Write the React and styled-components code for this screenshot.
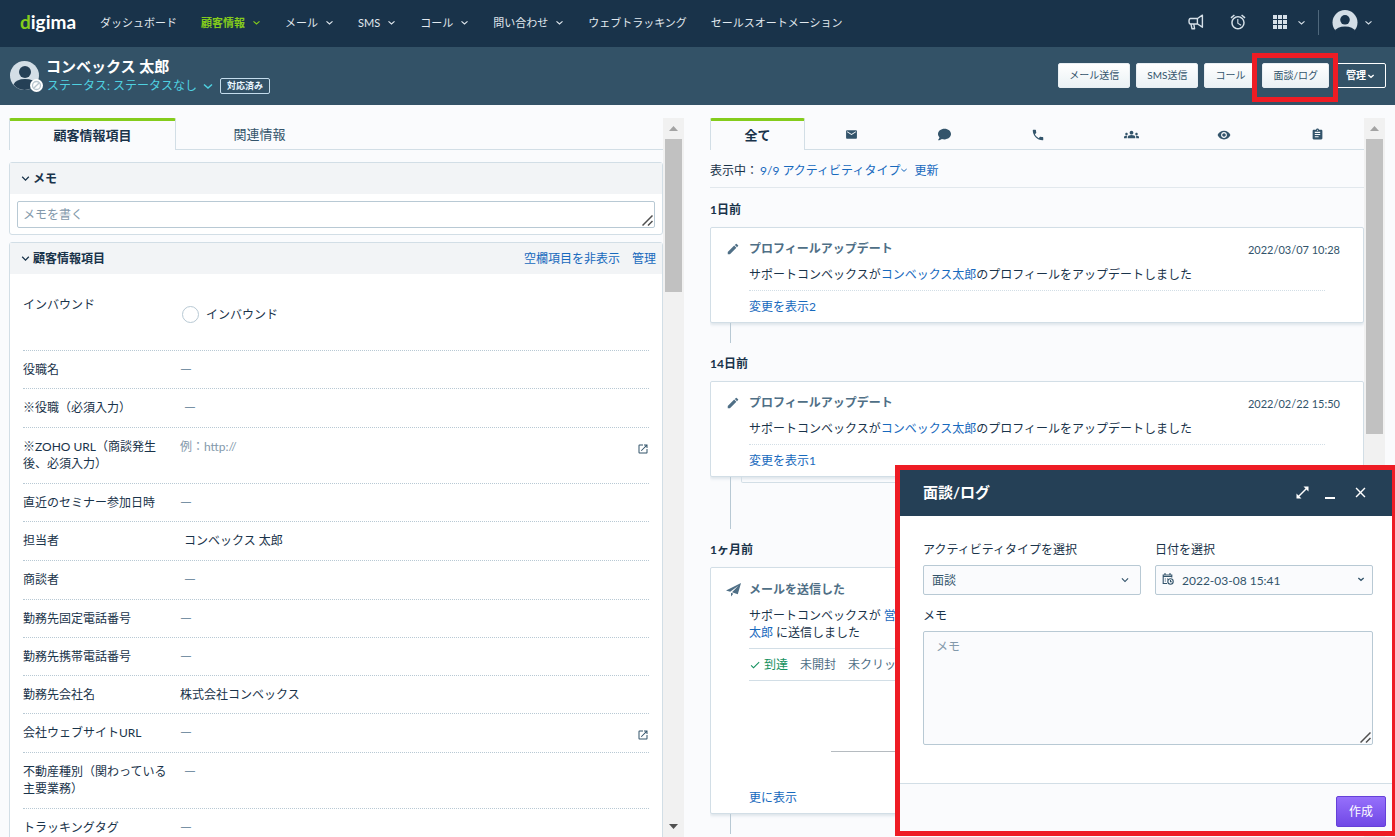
import React from "react";
import styled, { createGlobalStyle, css } from "styled-components";
import {
  MdAlarm,
  MdAssignment,
  MdCheck,
  MdClose,
  MdEdit,
  MdEmail,
  MdGroups,
  MdKeyboardArrowDown,
  MdOpenInNew,
  MdPhone,
  MdVisibility,
} from "react-icons/md";
import { FaComment } from "react-icons/fa";

const color = {
  nav: "#19334a",
  bar: "#335267",
  panelHead: "#254056",
  page: "#fafbfd",
  ink: "#19334a",
  slate: "#33546b",
  muted: "#4f6f86",
  faint: "#8399ab",
  line: "#d2dee6",
  field: "#b8c9d4",
  link: "#1769bd",
  green: "#84cc1c",
  highlight: "#ee1c24",
};

const GlobalStyle = createGlobalStyle`
  *, *::before, *::after { box-sizing: border-box; }
  body {
    margin: 0;
    background: ${color.page};
    color: ${color.ink};
    font: 12px/17px Lato, "Noto Sans CJK JP", sans-serif;
  }
  button, input, select, textarea { font: inherit; color: inherit; }
  button { cursor: pointer; }
  a { color: ${color.link}; text-decoration: none; }
  svg { display: block; flex: none; }
`;

const Page = styled.div`
  display: flex;
  flex-direction: column;
  height: 100vh;
  min-width: 1100px;
  overflow: hidden;
`;

/* ---------- top navigation ---------- */

const TopNav = styled.header`
  flex: none;
  display: flex;
  align-items: center;
  height: 47px;
  padding: 0 22px 3px 20px;
  background: ${color.nav};
  color: #e1e9ef;
`;

const Logo = styled.a`
  width: 80px;
  color: #fff;
  font-size: 19px;
  font-weight: 700;
  line-height: 24px;
  span { color: ${color.green}; }
`;

const Menu = styled.nav`
  display: flex;
  gap: 24px;
  flex: 1;
  white-space: nowrap;
`;

const MenuLink = styled.a`
  display: flex;
  align-items: center;
  gap: 7px;
  font-size: 11px;
  color: ${(p) => (p.$active ? color.green : "#e1e9ef")};
  font-weight: ${(p) => (p.$active ? 700 : 400)};
`;

const Tools = styled.div`
  display: flex;
  align-items: center;
  gap: 25px;
`;

const Tool = styled.button`
  display: flex;
  align-items: center;
  gap: 9px;
  padding: 0;
  border: 0;
  background: none;
  color: #d6e0e8;
`;

const AccountTool = styled(Tool)`
  height: 25px;
  margin-left: -13px;
  padding-left: 13px;
  border-left: 1px solid #4f687c;
  gap: 6px;
`;

/* ---------- customer bar ---------- */

const CustomerBar = styled.section`
  flex: none;
  display: flex;
  align-items: flex-start;
  height: 58px;
  padding: 0 9px 0 10px;
  background: ${color.bar};
`;

const AvatarBox = styled.div`
  padding-top: 13px;
  margin-right: 3px;
`;

const Identity = styled.div`
  flex: 1;
  padding-top: 8px;
`;

const CustomerName = styled.h1`
  margin: 0;
  color: #fff;
  font-size: 15px;
  line-height: 22px;
`;

const StatusLine = styled.div`
  display: flex;
  align-items: center;
  gap: 6px;
  color: #4fd1e0;
`;

const StatusButton = styled.button`
  display: flex;
  align-items: center;
  gap: 5px;
  padding: 0 0 0 1px;
  border: 0;
  background: none;
`;

const StatusTag = styled.span`
  height: 16px;
  padding: 0 6px;
  border: 1px solid #c4dcec;
  border-radius: 2px;
  color: #e9f6ff;
  font-size: 9px;
  font-weight: 700;
  line-height: 14px;
`;

const Actions = styled.div`
  display: flex;
  gap: 6px;
  padding-top: 16px;
`;

const ActionButton = styled.button`
  display: flex;
  align-items: center;
  justify-content: center;
  gap: 1px;
  height: 25px;
  padding: 0 10px;
  border: 1px solid #e8eef2;
  border-radius: 2px;
  background: linear-gradient(#fff, #eaf1f4);
  color: ${color.slate};
  font-size: 10px;
  line-height: 15px;
  white-space: nowrap;
  ${(p) =>
    p.$outline &&
    css`
      border-color: #fff;
      background: none;
      color: #fff;
      font-weight: 700;
    `}
`;

const Highlighted = styled.div`
  position: relative;
  &::after {
    content: "";
    position: absolute;
    inset: -10px -9px -14px -10px;
    border: 5px solid ${color.highlight};
    pointer-events: none;
  }
`;

/* ---------- two scrolling columns ---------- */

const Columns = styled.main`
  flex: 1;
  min-height: 0;
  display: flex;
  gap: 26px;
  padding: 13px 10px 0 9px;
`;

const Column = styled.section`
  flex: 1;
  min-width: 0;
  display: flex;
`;

const Scroller = styled.div`
  flex: 1;
  min-width: 0;
  overflow: hidden;
`;

const Track = styled.div`
  flex: none;
  width: 21px;
  display: flex;
  flex-direction: column;
  align-items: center;
  background: #f1f1f1;
`;

const TrackEnd = styled.span`
  display: flex;
  align-items: center;
  justify-content: center;
  height: 21px;
  color: ${(p) => (p.$idle ? "#a3a3a3" : "#505050")};
`;

const Thumb = styled.span`
  width: 17px;
  height: ${(p) => p.$size}px;
  margin-bottom: auto;
  background: #c1c1c1;
`;

const TabBar = styled.div`
  display: flex;
  height: 32px;
  border-bottom: 1px solid ${color.line};
`;

const Tab = styled.button`
  ${(p) => (p.$fill ? "flex: 1 1 0; min-width: 0;" : "width: 167px;")}
  display: flex;
  align-items: center;
  justify-content: center;
  height: 32px;
  padding: 1px 0 0;
  border: 0;
  background: none;
  color: ${color.slate};
  font-size: 13px;
  ${(p) =>
    p.$active &&
    css`
      padding: 0;
      border: solid ${color.line};
      border-width: 3px 1px 0;
      border-top-color: ${color.green};
      border-radius: 2px 2px 0 0;
      background: ${color.page};
      color: ${color.ink};
      font-weight: 700;
    `}
`;

/* ---------- profile cards ---------- */

const Card = styled.section`
  margin-top: ${(p) => (p.$first ? 12 : 7)}px;
  border: 1px solid ${color.line};
  border-radius: 3px;
  background: #fff;
`;

const CardHead = styled.div`
  display: flex;
  align-items: center;
  gap: 12px;
  height: 31px;
  padding: 0 6px 0 8px;
  background: #f2f4f6;
`;

const Fold = styled.button`
  display: flex;
  align-items: center;
  gap: 0;
  margin-right: auto;
  padding: 0;
  border: 0;
  background: none;
  font-weight: 700;
`;

const NoteField = styled.div`
  position: relative;
  display: flex;
  ${(p) => p.$inset && "padding: 7px 7px 6px;"}
  > svg {
    position: absolute;
    right: ${(p) => (p.$inset ? 9 : 2)}px;
    bottom: ${(p) => (p.$inset ? 8 : 2)}px;
  }
`;

const Note = styled.textarea`
  flex: 1;
  height: ${(p) => p.$height}px;
  padding: ${(p) => (p.$inset ? "4px 5px" : "6px 12px")};
  border: 1px solid ${color.field};
  border-radius: 2px;
  background: ${(p) => (p.$inset ? "#fff" : color.page)};
  resize: none;
  overflow: hidden;
  &::placeholder { color: ${color.faint}; opacity: 1; }
`;

const Fields = styled.dl`
  margin: 0 13px;
`;

const rowHeight = { radio: 77, text: 38, pick: 39, link: 39 };

const FieldRow = styled.div`
  display: flex;
  min-height: ${(p) => (p.$double ? 56 : rowHeight[p.$kind])}px;
  padding-top: ${(p) => (p.$kind === "radio" ? 22 : 10)}px;
  border-bottom: 1px dotted ${color.field};
  dt { width: 157px; white-space: pre-line; }
  dd {
    flex: 1;
    display: flex;
    justify-content: space-between;
    margin: 0;
    padding-left: ${(p) => (p.$kind === "pick" ? 4 : 0)}px;
  }
`;

const Hint = styled.span`
  color: ${color.faint};
`;

const Empty = styled.span`
  color: #7891a5;
  font-size: 15px;
  line-height: 15px;
`;

const RadioLabel = styled.label`
  display: flex;
  align-items: center;
  gap: 7px;
  height: 17px;
  margin: 10px 0 0 2px;
`;

const Radio = styled.input`
  appearance: none;
  width: 17px;
  height: 17px;
  margin: 0;
  border: 1px solid ${color.field};
  border-radius: 50%;
  background: #fff;
`;

const OpenLink = styled.a`
  padding: 5px 0 0;
  color: ${color.slate};
`;

/* ---------- activity timeline ---------- */

const Filter = styled.div`
  display: flex;
  align-items: center;
  height: 38px;
  padding-top: 3px;
  border-bottom: 1px solid #e2e8ed;
`;

const FilterButton = styled.button`
  display: flex;
  align-items: center;
  margin: 0 6px 0 2px;
  padding: 0;
  border: 0;
  background: none;
  color: ${color.link};
`;

const Day = styled.h2`
  margin: 0;
  padding: ${(p) => (p.$first ? 13 : 12)}px 0 9px;
  font-size: 12px;
`;

const Activity = styled.article`
  display: grid;
  grid-template-columns: 38px 1fr;
  min-height: ${(p) => (p.$tall ? 247 : 96)}px;
  padding: ${(p) => (p.$tall ? 13 : 12)}px 0 6px;
  border: 1px solid ${color.line};
  border-radius: 2px;
  background: #fff;
  box-shadow: 0 2px 3px rgba(80, 120, 140, 0.16);
`;

const ActivityIcon = styled.div`
  padding: 2px 0 0 15px;
  color: ${color.muted};
`;

const ActivityBody = styled.div`
  display: flex;
  flex-direction: column;
`;

const ActivityHead = styled.div`
  display: flex;
  justify-content: space-between;
  margin-bottom: 9px;
  padding-right: 23px;
  color: ${color.slate};
  time { padding-top: 2px; font-size: 11px; line-height: 15px; }
`;

const ActivityTitle = styled.h3`
  margin: 0;
  color: ${color.muted};
  font-size: 12px;
`;

const Message = styled.p`
  margin: 0 38px 7px 0;
  padding-bottom: 7px;
  border-bottom: 1px ${(p) => (p.$solid ? "solid" : "dotted")} ${color.line};
`;

const Delivery = styled.div`
  display: flex;
  gap: 12px;
  margin-right: 38px;
  padding-bottom: 7px;
  border-bottom: 1px solid ${color.line};
  color: ${color.muted};
`;

const Delivered = styled.span`
  display: flex;
  align-items: center;
  gap: 3px;
  color: #14915f;
`;

const Preview = styled.div`
  height: 30px;
  margin: 70px 120px 8px 82px;
  border-top: 1px solid #b5bbc0;
`;

const Connector = styled.div`
  height: ${(p) => p.$length}px;
  margin-left: 20px;
  border-left: 1px solid ${color.field};
  > i {
    display: block;
    width: 400px;
    height: 6px;
    margin-left: 10px;
    border: 1px solid ${color.line};
    border-top: 0;
    border-radius: 0 0 2px 2px;
  }
`;

/* ---------- log dialog ---------- */

const Dialog = styled.section`
  position: fixed;
  right: 0;
  bottom: 1px;
  width: 500px;
  border: 5px solid ${color.highlight};
  border-right-width: 3px;
  background: #fff;
`;

const DialogHead = styled.header`
  display: flex;
  align-items: center;
  gap: 16px;
  height: 46px;
  padding: 0 23px 2px;
  background: ${color.panelHead};
  color: #fff;
  h2 { flex: 1; margin: 0; font-size: 15px; line-height: 22px; }
`;

const WindowButton = styled.button`
  padding: 0;
  border: 0;
  background: none;
`;

const DialogBody = styled.form`
  display: grid;
  grid-template-columns: 1fr 1fr;
  gap: 12px 14px;
  padding: 25px 19px 38px 23px;
`;

const Field = styled.div`
  display: flex;
  flex-direction: column;
  gap: 7px;
  ${(p) => p.$wide && "grid-column: 1 / -1;"}
`;

const Control = styled.div`
  position: relative;
  display: flex;
  color: ${color.slate};
  > svg {
    position: absolute;
    top: ${(p) => (p.$small ? 10 : 8)}px;
    right: ${(p) => (p.$small ? 8 : 9)}px;
    pointer-events: none;
  }
  > svg:first-child { left: 7px; top: 8px; right: auto; }
`;

const inputBox = css`
  width: 100%;
  height: 30px;
  padding: 0 8px;
  border: 1px solid ${color.field};
  border-radius: 2px;
  background: ${color.page};
`;

const Select = styled.select`
  ${inputBox}
  appearance: none;
`;

const DateInput = styled.input`
  ${inputBox}
  padding-left: 26px;
`;

const DialogFoot = styled.footer`
  display: flex;
  justify-content: flex-end;
  height: 48px;
  padding: 12px 6px 0;
  border-top: 1px solid ${color.line};
  background: ${color.page};
`;

const SubmitButton = styled.button`
  height: 31px;
  padding: 0 12px;
  border: 1px solid #6540d8;
  border-radius: 2px;
  background: linear-gradient(#9670fb, #7048e6);
  color: #fff;
`;

/* ---------- drawings ---------- */

const Chevron = ({ size = 8, weight = 2 }) => (
  <svg width={size} height={size} viewBox="0 0 12 12" fill="none" stroke="currentColor" strokeWidth={weight}>
    <path d="M2 4.5 6 8l4-3.5" />
  </svg>
);

const Megaphone = () => (
  <svg width="16" height="16" viewBox="0 0 16 16" fill="none" stroke="currentColor" strokeWidth="1.4" strokeLinejoin="round">
    <path d="M14.4 1.2v12L9.6 10H2.5Q1 10 1 7.3T2.5 4.5h7z" />
    <path d="M9.4 4.5V10M3 10l1 4.8h2.6L5.8 10" />
  </svg>
);

const AppGrid = () => (
  <svg width="16" height="16" viewBox="0 0 16 16" fill="currentColor">
    {[1, 6, 11].map((y) => [1, 6, 11].map((x) => <rect key={`${x}-${y}`} x={x} y={y} width="4" height="4" />))}
  </svg>
);

const AccountFace = () => (
  <svg width="26" height="25" viewBox="0 0 26 25">
    <circle cx="13" cy="12.5" r="12.5" fill="#d3dee6" />
    <circle cx="13" cy="9.800" r="4.800" fill="#19334a" />
    <path fill="#19334a" d="M2.500 25V21.500Q5 16.500 13 16.500T23.500 21.500V25z" />
  </svg>
);

const CustomerFace = () => (
  <svg width="33" height="34" viewBox="0 0 33 34">
    <circle cx="14.500" cy="15.500" r="14.500" fill="#d3dee6" />
    <circle cx="15" cy="12" r="6" fill="#254056" />
    <path fill="#254056" d="M3.500 24.500Q6 19 15 19t10.800 5.300A14.500 14.500 0 0 1 14.500 30 14.500 14.500 0 0 1 3.500 24.500Z" />
    <circle cx="26.500" cy="25.500" r="6.500" fill="#fff" />
    <g fill="none" stroke="#b9c6cf" strokeWidth="1.300">
      <circle cx="26.500" cy="25.500" r="4" />
      <path d="m23.700 28.300 5.600-5.600" />
    </g>
  </svg>
);

const PaperPlane = () => (
  <svg width="15" height="14" viewBox="0 0 15 14" fill="currentColor">
    <path d="M15 0 0 7.500l4.200 1.300L12 3zM15 0 6 9.200l5.800 2zM5 9.700l2.300 1L5 13.500z" />
  </svg>
);

const ResizeGrip = () => (
  <svg width="11" height="11" viewBox="0 0 11 11" stroke="#505050" strokeWidth="1.500">
    <path d="M.5 10.500l10-10M6 10.500l4.500-4.500" />
  </svg>
);

const ExpandMark = () => (
  <svg width="13" height="13" viewBox="0 0 13 13" fill="none" stroke="currentColor" strokeWidth="1.500">
    <path d="M2 11l9-9" />
    <path fill="currentColor" stroke="none" d="M7.500.5h5v5zM.5 7.500v5h5z" />
  </svg>
);

const MinimizeMark = () => (
  <svg width="11" height="13" viewBox="0 0 11 13" fill="currentColor">
    <rect y="11" width="10" height="2" />
  </svg>
);

const CalendarClock = () => (
  <svg width="12" height="12" viewBox="0 0 12 12" fill="none" stroke="currentColor" strokeWidth="1.100">
    <path d="M5 10.500H1.200V2h8.600v2.500M1.200 3.500h8.600M3 0v2M8 0v2" />
    <path d="M2.800 6h1M5 6h1M2.800 8h1" />
    <circle cx="8.500" cy="8.500" r="2.700" />
    <path d="M8.500 7v1.700h1.300" />
  </svg>
);

const Arrow = ({ up }) => (
  <svg width="9" height="5" viewBox="0 0 9 5" fill="currentColor">
    <path d={up ? "M0 5 4.500 0 9 5z" : "M0 0h9L4.500 5z"} />
  </svg>
);

/* ---------- content ---------- */

const menu = [
  { text: "ダッシュボード" },
  { text: "顧客情報", more: true, active: true },
  { text: "メール", more: true },
  { text: "SMS", more: true },
  { text: "コール", more: true },
  { text: "問い合わせ", more: true },
  { text: "ウェブトラッキング" },
  { text: "セールスオートメーション" },
];

const fields = [
  { label: "役職名", kind: "text" },
  { label: "※役職（必須入力）", kind: "pick" },
  { label: "※ZOHO URL（商談発生\n後、必須入力）", kind: "link", hint: "例：http://", double: true },
  { label: "直近のセミナー参加日時", kind: "text" },
  { label: "担当者", kind: "pick", value: "コンベックス 太郎" },
  { label: "商談者", kind: "pick" },
  { label: "勤務先固定電話番号", kind: "text" },
  { label: "勤務先携帯電話番号", kind: "text" },
  { label: "勤務先会社名", kind: "text", value: "株式会社コンベックス" },
  { label: "会社ウェブサイトURL", kind: "link" },
  { label: "不動産種別（関わっている\n主要業務）", kind: "pick", double: true },
  { label: "トラッキングタグ", kind: "text" },
];

const activityTabs = [
  { name: "メール", icon: <MdEmail size={13} /> },
  { name: "SMS", icon: <FaComment size={13} /> },
  { name: "コール", icon: <MdPhone size={14} /> },
  { name: "面談", icon: <MdGroups size={15} /> },
  { name: "閲覧", icon: <MdVisibility size={14} /> },
  { name: "ログ", icon: <MdAssignment size={13} /> },
];

function Scrollbar({ size }) {
  return (
    <Track aria-hidden="true">
      <TrackEnd $idle><Arrow up /></TrackEnd>
      <Thumb $size={size} />
      <TrackEnd><Arrow /></TrackEnd>
    </Track>
  );
}

function FieldValue({ value, hint }) {
  if (value) return <span>{value}</span>;
  return hint ? <Hint>{hint}</Hint> : <Empty>—</Empty>;
}

function ProfileUpdate({ date, changes }) {
  return (
    <Activity>
      <ActivityIcon><MdEdit size={14} /></ActivityIcon>
      <ActivityBody>
        <ActivityHead>
          <ActivityTitle>プロフィールアップデート</ActivityTitle>
          <time>{date}</time>
        </ActivityHead>
        <Message>
          サポートコンベックスが<a href="#customer">コンベックス太郎</a>のプロフィールをアップデートしました
        </Message>
        <a href="#changes">変更を表示{changes}</a>
      </ActivityBody>
    </Activity>
  );
}

export default function App() {
  return (
    <Page>
      <GlobalStyle />
      <TopNav>
        <Logo href="#home"><span>d</span>igima</Logo>
        <Menu>
          {menu.map((m) => (
            <MenuLink key={m.text} href="#menu" $active={m.active}>
              {m.text}
              {m.more && <Chevron size={9} weight={1.5} />}
            </MenuLink>
          ))}
        </Menu>
        <Tools>
          <Tool aria-label="お知らせ"><Megaphone /></Tool>
          <Tool aria-label="リマインダー"><MdAlarm size={18} /></Tool>
          <Tool aria-label="アプリ"><AppGrid /><Chevron size={9} weight={1.5} /></Tool>
          <AccountTool aria-label="アカウント"><AccountFace /><Chevron size={9} weight={1.5} /></AccountTool>
        </Tools>
      </TopNav>

      <CustomerBar>
        <AvatarBox><CustomerFace /></AvatarBox>
        <Identity>
          <CustomerName>コンベックス 太郎</CustomerName>
          <StatusLine>
            <StatusButton>ステータス: ステータスなし <Chevron size={12} weight={1.5} /></StatusButton>
            <StatusTag>対応済み</StatusTag>
          </StatusLine>
        </Identity>
        <Actions>
          <ActionButton>メール送信</ActionButton>
          <ActionButton>SMS送信</ActionButton>
          <ActionButton>コール</ActionButton>
          <Highlighted><ActionButton>面談/ログ</ActionButton></Highlighted>
          <ActionButton $outline>管理<Chevron /></ActionButton>
        </Actions>
      </CustomerBar>

      <Columns>
        <Column>
          <Scroller>
            <TabBar role="tablist">
              <Tab role="tab" aria-selected="true" $active>顧客情報項目</Tab>
              <Tab role="tab" aria-selected="false">関連情報</Tab>
            </TabBar>

            <Card $first>
              <CardHead>
                <Fold><MdKeyboardArrowDown size={15} />メモ</Fold>
              </CardHead>
              <NoteField $inset>
                <Note $inset $height={27} aria-label="メモ" placeholder="メモを書く" />
                <ResizeGrip />
              </NoteField>
            </Card>

            <Card>
              <CardHead>
                <Fold><MdKeyboardArrowDown size={15} />顧客情報項目</Fold>
                <a href="#hide-empty">空欄項目を非表示</a>
                <a href="#manage">管理</a>
              </CardHead>
              <Fields>
                <FieldRow $kind="radio">
                  <dt>インバウンド</dt>
                  <dd><RadioLabel><Radio type="radio" name="inbound" />インバウンド</RadioLabel></dd>
                </FieldRow>
                {fields.map((f) => (
                  <FieldRow key={f.label} $kind={f.kind} $double={f.double}>
                    <dt>{f.label}</dt>
                    <dd>
                      <FieldValue value={f.value} hint={f.hint} />
                      {f.kind === "link" && (
                        <OpenLink href="#open" aria-label="開く"><MdOpenInNew size={12} /></OpenLink>
                      )}
                    </dd>
                  </FieldRow>
                ))}
              </Fields>
            </Card>
          </Scroller>
          <Scrollbar size={153} />
        </Column>

        <Column>
          <Scroller>
            <TabBar role="tablist">
              <Tab role="tab" aria-selected="true" $fill $active>全て</Tab>
              {activityTabs.map((t) => (
                <Tab key={t.name} role="tab" aria-selected="false" aria-label={t.name} $fill>{t.icon}</Tab>
              ))}
            </TabBar>
            <Filter>
              表示中：
              <FilterButton>9/9 アクティビティタイプ<Chevron weight={1.5} /></FilterButton>
              <a href="#refresh">更新</a>
            </Filter>

            <Day $first>1日前</Day>
            <ProfileUpdate date="2022/03/07 10:28" changes={2} />
            <Connector $length={20} />

            <Day>14日前</Day>
            <ProfileUpdate date="2022/02/22 15:50" changes={1} />
            <Connector $length={52}><i /></Connector>

            <Day>1ヶ月前</Day>
            <Activity $tall>
              <ActivityIcon><PaperPlane /></ActivityIcon>
              <ActivityBody>
                <ActivityHead><ActivityTitle>メールを送信した</ActivityTitle></ActivityHead>
                <Message $solid>
                  サポートコンベックスが <a href="#customer">営業<br />太郎</a> に送信しました
                </Message>
                <Delivery>
                  <Delivered><MdCheck size={12} />到達</Delivered>
                  <span>未開封</span>
                  <span>未クリック</span>
                </Delivery>
                <Preview />
                <a href="#more">更に表示</a>
              </ActivityBody>
            </Activity>
            <Connector $length={20} />
          </Scroller>
          <Scrollbar size={295} />
        </Column>
      </Columns>

      <Dialog role="dialog" aria-labelledby="log-title">
        <DialogHead>
          <h2 id="log-title">面談/ログ</h2>
          <WindowButton aria-label="拡大"><ExpandMark /></WindowButton>
          <WindowButton aria-label="最小化"><MinimizeMark /></WindowButton>
          <WindowButton aria-label="閉じる"><MdClose size={17} /></WindowButton>
        </DialogHead>
        <DialogBody id="log-form">
          <Field>
            <label htmlFor="log-type">アクティビティタイプを選択</label>
            <Control>
              <Select id="log-type" defaultValue="面談"><option>面談</option></Select>
              <MdKeyboardArrowDown size={14} />
            </Control>
          </Field>
          <Field>
            <label htmlFor="log-date">日付を選択</label>
            <Control $small>
              <CalendarClock />
              <DateInput id="log-date" type="text" defaultValue="2022-03-08 15:41" />
              <Chevron />
            </Control>
          </Field>
          <Field $wide>
            <label htmlFor="log-note">メモ</label>
            <NoteField>
              <Note id="log-note" $height={114} placeholder="メモ" />
              <ResizeGrip />
            </NoteField>
          </Field>
        </DialogBody>
        <DialogFoot>
          <SubmitButton type="submit" form="log-form">作成</SubmitButton>
        </DialogFoot>
      </Dialog>
    </Page>
  );
}
